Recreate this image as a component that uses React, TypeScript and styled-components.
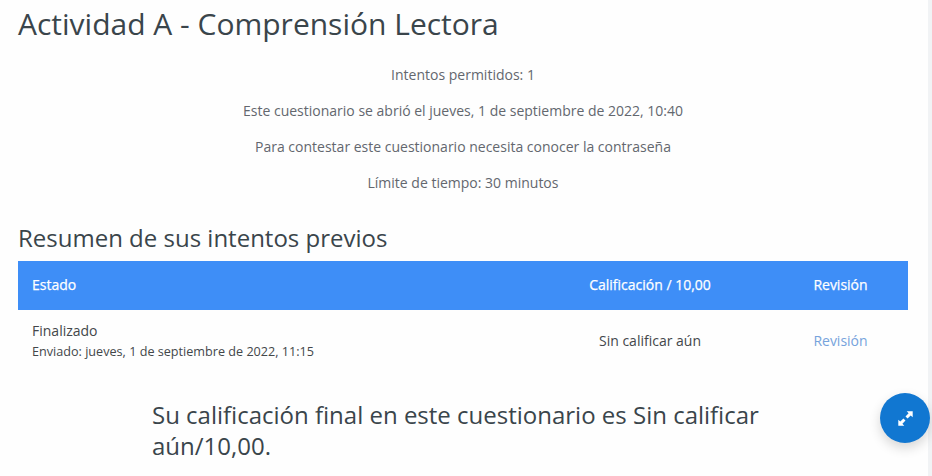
import React from "react";
import styled, { createGlobalStyle } from "styled-components";

const Global = createGlobalStyle`
  * { box-sizing: border-box; }
  html, body { margin: 0; background: #f1f3f5; overflow: hidden; }
  body { font-family: "Open Sans", sans-serif; font-size: 14px; line-height: 21px; color: #43474a; }
`;

const Page = styled.main`
  width: 928px;
  height: 476px;
  overflow: hidden;
  background: #fefefe;
  padding: 6px 20px 0 18px;
`;

const Title = styled.h2`
  margin: 0;
  font-size: 30px;
  line-height: 36px;
  font-weight: 400;
  color: #3a454b;
  white-space: nowrap;
`;

const Info = styled.section`
  display: flex;
  flex-direction: column;
  align-items: center;
  gap: 15px;
  margin-top: 22px;
  color: #63676e;
`;

const InfoLine = styled.p`
  margin: 0;
`;

const Subtitle = styled.h3`
  margin: 30px 0 8px;
  font-size: 24px;
  line-height: 30px;
  font-weight: 400;
  color: #3a454b;
`;

const Table = styled.div`
  display: flex;
  flex-direction: column;
`;

const Row = styled.div<{ $head?: boolean }>`
  display: grid;
  grid-template-columns: 496px 272px 109px;
  align-items: center;
  height: ${(p) => (p.$head ? "49px" : "62px")};
  background: ${(p) => (p.$head ? "#3e8ef7" : "transparent")};
  color: ${(p) => (p.$head ? "#fff" : "#43474a")};
  -webkit-text-stroke: ${(p) => (p.$head ? "0.25px #fff" : "0")};
`;

const Cell = styled.div<{ $center?: boolean }>`
  padding: ${(p) => (p.$center ? "0 0 2px" : "0 14px")};
  text-align: ${(p) => (p.$center ? "center" : "left")};
`;

const HeadCell = styled(Cell)`
  padding-bottom: 2px;
`;

const Detail = styled.small`
  display: block;
  font-size: 12.63px;
`;

const ReviewLink = styled.a`
  color: #76a3dc;
  text-decoration: none;
`;

const FinalGrade = styled.h3`
  width: 622px;
  margin: 27px auto 0;
  font-size: 24px;
  line-height: 31px;
  font-weight: 400;
  color: #3a454b;
`;

const ExpandButton = styled.button`
  position: fixed;
  left: 880px;
  top: 393px;
  width: 50px;
  height: 50px;
  border: 0;
  padding: 0;
  border-radius: 50%;
  background: #1177d1;
  color: #fff;
  display: flex;
  align-items: center;
  justify-content: center;
  box-shadow: 0 5px 12px rgba(0, 0, 0, 0.16);
`;

const ExpandIcon = () => (
  <svg width="15" height="15" viewBox="0 0 15 15" fill="currentColor" aria-hidden="true">
    <path d="M8.7 .3H14.7V6.3L12.7 4.4L9.6 7.5L7.5 5.4L10.6 2.3Z" />
    <path d="M6.3 14.7H.3V8.7L2.3 10.6L5.4 7.5L7.5 9.6L4.4 12.7Z" />
  </svg>
);

const info = [
  "Intentos permitidos: 1",
  "Este cuestionario se abrió el jueves, 1 de septiembre de 2022, 10:40",
  "Para contestar este cuestionario necesita conocer la contraseña",
  "Límite de tiempo: 30 minutos",
];

export default function App() {
  return (
    <>
      <Global />
      <Page>
        <Title>Actividad A - Comprensión Lectora</Title>
        <Info>
          {info.map((line) => (
            <InfoLine key={line}>{line}</InfoLine>
          ))}
        </Info>
        <Subtitle>Resumen de sus intentos previos</Subtitle>
        <Table>
          <Row $head>
            <HeadCell>Estado</HeadCell>
            <HeadCell $center>Calificación / 10,00</HeadCell>
            <HeadCell $center>Revisión</HeadCell>
          </Row>
          <Row>
            <Cell>
              Finalizado
              <Detail>Enviado: jueves, 1 de septiembre de 2022, 11:15</Detail>
            </Cell>
            <Cell $center>Sin calificar aún</Cell>
            <Cell $center>
              <ReviewLink href="#">Revisión</ReviewLink>
            </Cell>
          </Row>
        </Table>
        <FinalGrade>Su calificación final en este cuestionario es Sin calificar aún/10,00.</FinalGrade>
      </Page>
      <ExpandButton aria-label="Expandir">
        <ExpandIcon />
      </ExpandButton>
    </>
  );
}
